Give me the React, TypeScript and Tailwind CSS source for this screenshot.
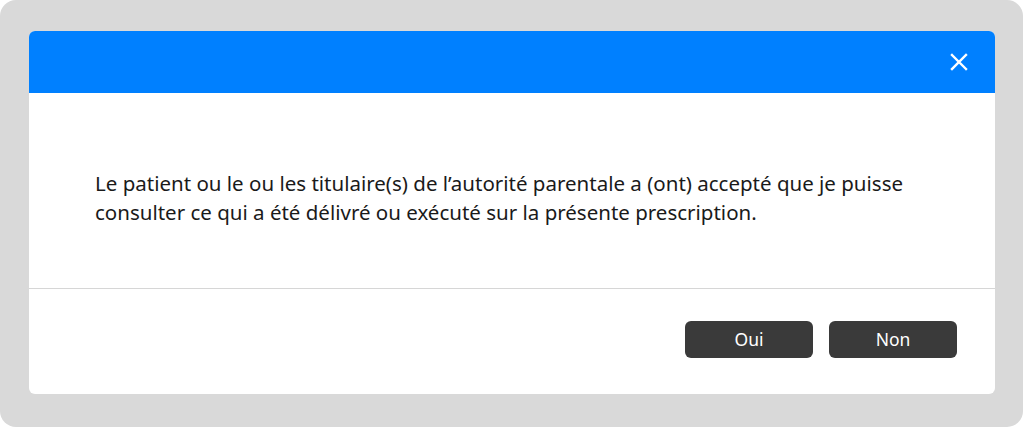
export default function App() {
  return (
    <div className="h-[428px] w-[1024px] bg-white">
      <div className="h-[427px] w-[1023px] rounded-[16px] bg-[#d9d9d9] pl-[29px] pr-[28px] pt-[31px] pb-[33px]">
        <div className="flex h-full flex-col overflow-hidden rounded-[6px] bg-white">
          {/* Header */}
          <div className="flex h-[62px] items-center justify-end bg-[#0080ff] pr-[27px]">
            <button className="text-white">
              <svg width="18" height="18" viewBox="0 0 18 18" fill="none" stroke="currentColor" strokeWidth="2.4" strokeLinecap="square">
                <path d="M2 2L16 16M16 2L2 16" />
              </svg>
            </button>
          </div>

          {/* Body */}
          <div className="h-[196px] border-b border-[#d6d6d6] px-[66px] pt-[76px]">
            <p className="whitespace-nowrap font-['Noto_Sans',sans-serif] text-[20.5px] leading-[29px] text-[#1a1a1a]">
              Le patient ou le ou les titulaire(s) de l’autorité parentale a (ont) accepté que je puisse
              <br />
              consulter ce qui a été délivré ou exécuté sur la présente prescription.
            </p>
          </div>

          {/* Footer */}
          <div className="flex justify-end gap-[16px] pr-[38px] pt-[32px]">
            <button className="h-[37px] w-[128px] rounded-[6px] bg-[#3a3a3a] font-['Noto_Sans',sans-serif] text-[17.5px] text-white">
              Oui
            </button>
            <button className="h-[37px] w-[128px] rounded-[6px] bg-[#3a3a3a] font-['Noto_Sans',sans-serif] text-[17.5px] text-white">
              Non
            </button>
          </div>
        </div>
      </div>
    </div>
  )
}
